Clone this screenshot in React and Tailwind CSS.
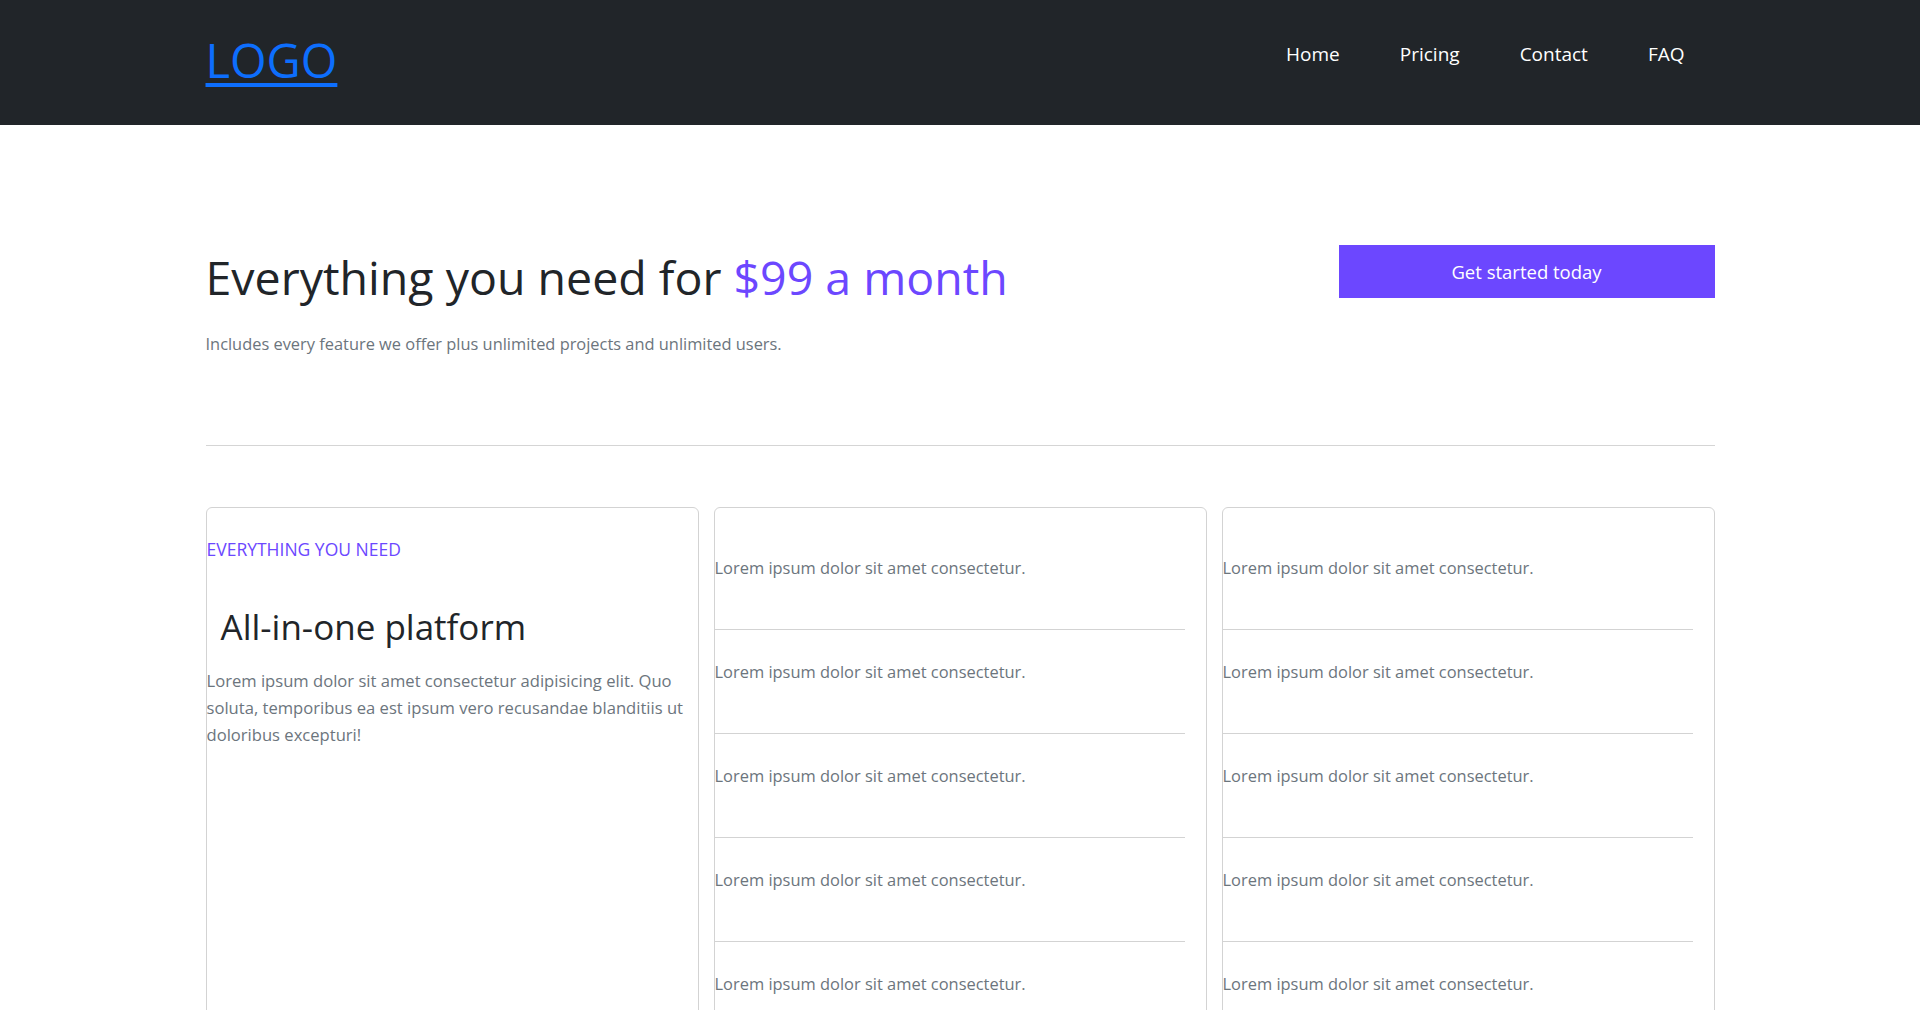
export default function App() {
  const items = [1, 2, 3, 4, 5];
  const font = { fontFamily: '"Open Sans", "Noto Sans", sans-serif' };
  return (
    <div className="min-h-screen bg-white font-['Open_Sans','Noto_Sans',sans-serif]" style={font}>
      <header className="h-[125px] bg-[#212529]">
        <div className="mx-auto flex h-full w-[1509px] items-start justify-between">
          <a href="#" className="mt-[32px] text-[47px] leading-[1.2] text-[#0d6efd] underline decoration-[4px] underline-offset-[5px]">
            LOGO
          </a>
          <nav className="mt-[40px] flex">
            {['Home', 'Pricing', 'Contact', 'FAQ'].map((l) => (
              <a key={l} href="#" className="px-[30px] text-[19px] leading-[28px] text-white">
                {l}
              </a>
            ))}
          </nav>
        </div>
      </header>

      <main className="mx-auto w-[1509px]">
        <section className="flex items-start justify-between pt-[120px]">
          <div className="pt-[4px]">
            <h1 className="text-[46.5px] font-medium leading-[56px] text-[#212529]">
              Everything you need for <span className="text-[#6c47ff]">$99 a month</span>
            </h1>
            <p className="mt-[27px] text-[16.4px] leading-[24px] text-[#6c757d]">
              Includes every feature we offer plus unlimited projects and unlimited users.
            </p>
          </div>
          <button className="h-[53px] w-[376px] bg-[#6c47ff] text-[18.5px] text-white">Get started today</button>
        </section>

        <hr className="mt-[89px] border-t border-[#d5d5d5]" />

        <section className="mt-[61px] grid grid-cols-3 gap-[15px]">
          <div className="h-[560px] rounded-[6px] border border-[#d3d3d3]">
            <p className="mt-[29px] text-[17.5px] uppercase leading-[24px] text-[#6c47ff]">Everything you need</p>
            <h2 className="mt-[46px] pl-[14px] text-[35px] font-medium leading-[40px] text-[#212529]">
              All-in-one platform
            </h2>
            <p className="mt-[20px] text-[16.6px] leading-[27px] text-[#6c757d]">
              Lorem ipsum dolor sit amet consectetur adipisicing elit. Quo soluta, temporibus ea est ipsum vero recusandae blanditiis ut doloribus excepturi!
            </p>
          </div>
          {[0, 1].map((c) => (
            <div key={c} className="h-[560px] rounded-[6px] border border-[#d3d3d3] pt-[18px]">
              <ul className="mr-[21px]">
                {items.map((i) => (
                  <li key={i} className="border-b border-[#d3d3d3] pb-[49px] pt-[30px] text-[16.45px] leading-[24px] text-[#6c757d]">
                    Lorem ipsum dolor sit amet consectetur.
                  </li>
                ))}
              </ul>
            </div>
          ))}
        </section>
      </main>
    </div>
  );
}
